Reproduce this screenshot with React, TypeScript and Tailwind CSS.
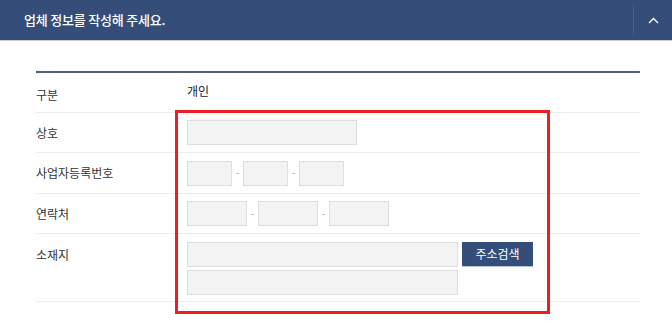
import React from 'react';

const font = { fontFamily: '"Noto Sans CJK KR", "Noto Sans", sans-serif' };

function Field({ w }: { w: string }) {
  return <div className={`h-[25px] ${w} border border-[#dedede] bg-[#f3f3f3]`} />;
}

function Dash() {
  return <span className="w-[11px] text-center text-[9px] text-[#999]">-</span>;
}

function Row({ label, children, h }: { label: string; children: React.ReactNode; h: string }) {
  return (
    <div className={`flex items-center border-b border-[#ededed] ${h}`}>
      <div className="w-[151px] text-[12px] text-[#333]">{label}</div>
      <div className="flex-1">{children}</div>
    </div>
  );
}

export default function App() {
  return (
    <div className="relative h-[327px] w-[672px] overflow-hidden bg-white" style={font}>
      <div className="flex h-[41px] items-center justify-between border-b border-[#c9ccd3] bg-[#344e79]">
        <h2 className="pl-6 text-[13px] font-medium tracking-[-0.2px] text-white">업체 정보를 작성해 주세요.</h2>
        <div className="flex h-full items-center">
          <div className="h-[30px] w-px bg-[#4a6089]" />
          <button className="flex w-[38px] items-center justify-center text-white">
            <svg width="11" height="7" viewBox="0 0 11 7" fill="none" stroke="currentColor" strokeWidth="1.3">
              <path d="M1 6 L5.5 1.5 L10 6" />
            </svg>
          </button>
        </div>
      </div>

      <div className="ml-9 mr-8 mt-[30px] border-t-2 border-[#4f5f80]">
        <div className="flex h-[40px] border-b border-[#ededed]">
          <div className="w-[151px] pt-[13px] text-[12px] text-[#333]">구분</div>
          <div className="pt-[9px] text-[12px] text-[#222]">개인</div>
        </div>
        <Row label="상호" h="h-[40px]">
          <Field w="w-[170px]" />
        </Row>
        <Row label="사업자등록번호" h="h-[41px]">
          <div className="flex items-center">
            <Field w="w-[45px]" />
            <Dash />
            <Field w="w-[45px]" />
            <Dash />
            <Field w="w-[45px]" />
          </div>
        </Row>
        <Row label="연락처" h="h-[40px]">
          <div className="flex items-center">
            <Field w="w-[60px]" />
            <Dash />
            <Field w="w-[60px]" />
            <Dash />
            <Field w="w-[60px]" />
          </div>
        </Row>
        <div className="flex h-[68px] items-start border-b border-[#ededed] pt-2">
          <div className="w-[151px] pt-[4px] text-[12px] text-[#333]">소재지</div>
          <div className="flex flex-col gap-[3px]">
            <div className="flex items-start gap-[4px]">
              <Field w="w-[271px]" />
              <button className="h-[25px] w-[71px] border-b border-[#b9c3d6] bg-[#344e79] text-[12px] text-white">주소검색</button>
            </div>
            <Field w="w-[271px]" />
          </div>
        </div>
      </div>

      <div className="absolute left-[175px] top-[110px] h-[204px] w-[375px] border-[3px] border-[#ee1c25]" />
    </div>
  );
}
